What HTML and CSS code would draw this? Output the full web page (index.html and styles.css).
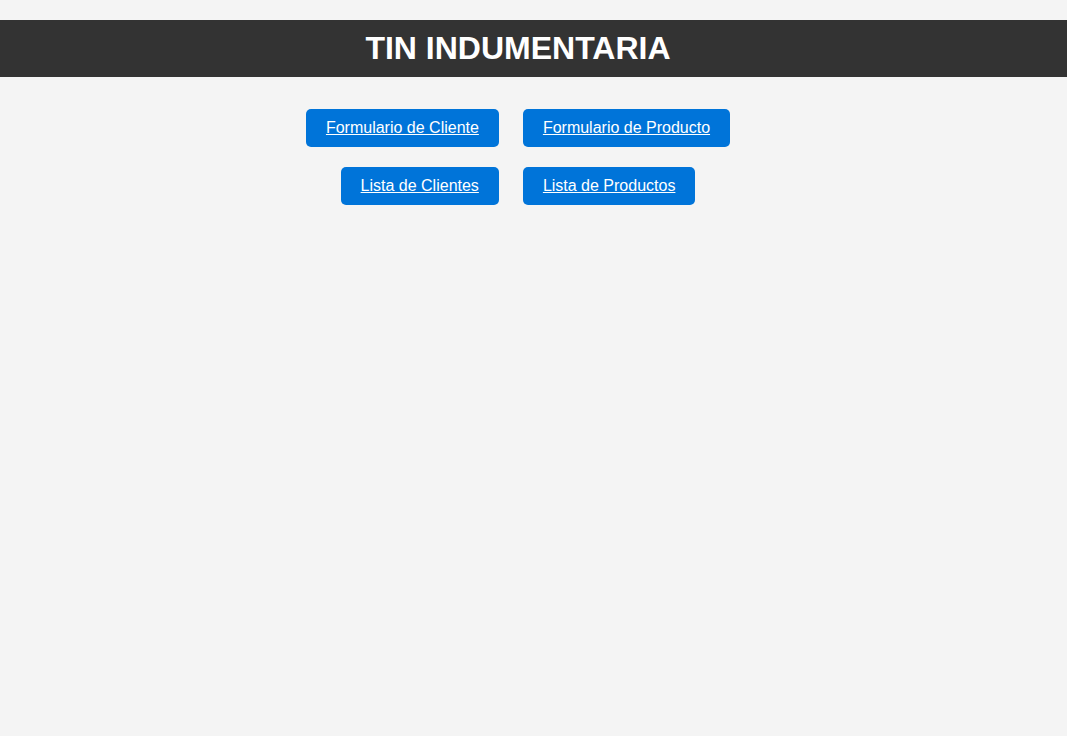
FILE: index.html
```html
<!DOCTYPE html>
<html lang="es">
<head>
<meta charset="utf-8">
<title>TIN INDUMENTARIA</title>
<link rel="stylesheet" href="styles.css">
</head>
<body>
<header class="site-header">
  <h1 class="site-title">TIN INDUMENTARIA</h1>
</header>
<nav class="menu">
  <div class="menu-row">
    <a class="menu-btn" href="#">Formulario de Cliente</a>
    <a class="menu-btn" href="#">Formulario de Producto</a>
  </div>
  <div class="menu-row">
    <a class="menu-btn" href="#">Lista de Clientes</a>
    <a class="menu-btn" href="#">Lista de Productos</a>
  </div>
</nav>
</body>
</html>
```

FILE: styles.css
```css
html, body {
  margin: 0;
  padding: 0;
  background: #f4f4f4;
}
body {
  font-family: "Liberation Sans", Arial, sans-serif;
  padding-top: 20px;
}
.site-header {
  background: #333333;
  height: 57px;
  display: flex;
  align-items: center;
  justify-content: center;
  padding-right: 31px;
}
.site-title {
  margin: 0;
  color: #ffffff;
  font-size: 32px;
  font-weight: bold;
  line-height: 37px;
}
.menu {
  display: flex;
  flex-direction: column;
  gap: 20px;
  padding-top: 32px;
  padding-right: 31px;
}
.menu-row {
  display: flex;
  justify-content: center;
  gap: 24px;
}
.menu-btn {
  display: block;
  background: #0074d9;
  color: #ffffff;
  font-size: 16px;
  line-height: 18px;
  padding: 10px 20px;
  border-radius: 5px;
  text-decoration: underline;
}
```
